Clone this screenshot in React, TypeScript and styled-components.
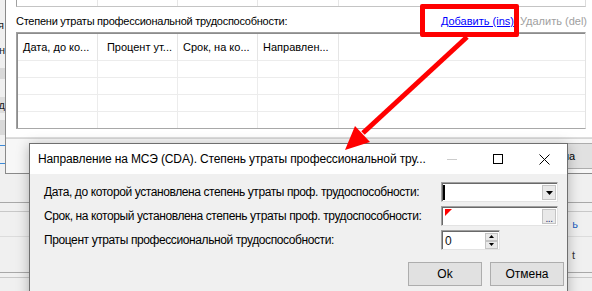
import React from "react";
import styled, { createGlobalStyle } from "styled-components";

const FONT = `"Liberation Sans", Arial, sans-serif`;

const Global = createGlobalStyle`
  html, body { margin: 0; padding: 0; }
  body {
    width: 592px; height: 291px; overflow: hidden;
    background: #f0f0f0; font-family: ${FONT}; font-size: 12px; color: #000;
  }
  #root { width: 592px; height: 291px; }
  * { box-sizing: border-box; }
`;

const Desktop = styled.div`
  position: relative;
  width: 592px;
  height: 291px;
  overflow: hidden;
  background: #f0f0f0;
`;

/* ---------- far back window (only edges visible) ---------- */
const BackWindow = styled.div`
  position: absolute;
  inset: 0;
  display: flex;
  flex-direction: column;
  background: #f0f0f0;
  font-size: 11px;
`;
const BackRow = styled.div<{ $h: number; $line?: string }>`
  flex: none;
  height: ${(p) => p.$h}px;
  display: flex;
  align-items: center;
  justify-content: space-between;
  border-bottom: ${(p) => (p.$line ? `1px solid ${p.$line}` : "0")};
`;
const LeftPeek = styled.div<{ $w: number }>`
  width: ${(p) => p.$w}px;
  height: 100%;
  overflow: hidden;
  display: flex;
  align-items: center;
  justify-content: flex-end;
  white-space: nowrap;
  color: #222;
`;
const PeekBox = styled.div<{ $bg: string }>`
  flex: none;
  height: 100%;
  min-width: 40px;
  background: ${(p) => p.$bg};
  display: flex;
  align-items: center;
  justify-content: flex-end;
  color: #222;
`;
const RightPeek = styled.div<{ $color: string; $pad: number }>`
  width: 24px;
  height: 100%;
  overflow: hidden;
  display: flex;
  align-items: center;
  justify-content: flex-end;
  padding-right: ${(p) => p.$pad}px;
  white-space: nowrap;
  color: ${(p) => p.$color};
`;

/* ---------- main window with the list ---------- */
const MainWindow = styled.div`
  position: absolute;
  left: 5px;
  top: 0;
  width: 600px;
  height: 174px;
  display: flex;
  flex-direction: column;
  background: #fff;
  border-left: 1px solid #8a8a8a;
  border-bottom: 1px solid #8a8a8a;
  font-size: 11px;
`;
const Panel = styled.div`
  flex: none;
  height: 137px;
  padding-left: 10px;
  display: flex;
  flex-direction: column;
`;
const TopTable = styled.div`
  flex: none;
  width: 570px;
  height: 7px;
  display: grid;
  grid-template-columns: 81px 80px 80px 81px 1fr;
  border-left: 1px solid #a0a0a0;
  border-right: 1px solid #dcdcdc;
  border-bottom: 1px solid #c4c4c4;
`;
const TopCell = styled.div`
  border-right: 1px solid #e6e6e6;
  &:last-child { border-right: 0; }
`;
const LabelRow = styled.div`
  flex: none;
  width: 571px;
  height: 25px;
  padding-top: 3px;
  display: flex;
  align-items: center;
  justify-content: space-between;
`;
const Caption = styled.span`
  color: #000;
  white-space: nowrap;
  letter-spacing: -0.25px;
`;
const Links = styled.div`
  display: flex;
  gap: 6px;
  white-space: nowrap;
`;
const LinkText = styled.span<{ $disabled?: boolean }>`
  color: ${(p) => (p.$disabled ? "#a0a0a0" : "#0000ff")};
  text-decoration: ${(p) => (p.$disabled ? "none" : "underline")};
`;
const ListView = styled.div`
  flex: none;
  width: 570px;
  height: 97px;
  background: #fff;
  border-top: 1px solid #a0a0a0;
  border-left: 1px solid #a0a0a0;
  border-right: 1px solid #e3e3e3;
  border-bottom: 1px solid #a8a8a8;
  box-shadow: inset 1px 1px 0 #8c8c8c;
  padding: 1px 0 0 1px;
  display: grid;
  grid-template-columns: 80px 80px 80px 81px 1fr;
  grid-template-rows: 27px repeat(4, 17px);
  overflow: hidden;
`;
const HeadCell = styled.div<{ $right?: boolean }>`
  display: flex;
  align-items: center;
  justify-content: ${(p) => (p.$right ? "flex-end" : "flex-start")};
  padding: 0 5px;
  border-right: 1px solid #e5e5e5;
  border-bottom: 1px solid #ececec;
  white-space: nowrap;
  overflow: hidden;
  &:nth-child(5n) { border-right: 0; }
`;
const GridCell = styled.div`
  border-right: 1px solid #ececec;
  border-bottom: 1px solid #ececec;
  &:nth-child(5n) { border-right: 0; }
`;
const Separator = styled.div`
  flex: none;
  height: 2px;
  background: linear-gradient(#e2e2e2, #d2d2d2);
`;
const Footer = styled.div`
  flex: none;
  height: 34px;
  background: #f7f7f7;
  display: flex;
  justify-content: flex-end;
  padding: 4px 12px 0 0;
`;

/* ---------- dialog ---------- */
const Dialog = styled.div`
  position: absolute;
  left: 29px;
  top: 143px;
  width: 539px;
  height: 170px;
  display: flex;
  flex-direction: column;
  background: #f0f0f0;
  border: 1px solid #6f6f6f;
  box-shadow: 0 2px 12px rgba(0, 0, 0, 0.28);
  letter-spacing: -0.4px;
`;
const TitleBar = styled.div`
  flex: none;
  height: 30px;
  background: #fff;
  display: flex;
  align-items: center;
`;
const TitleText = styled.div`
  flex: 1;
  min-width: 0;
  padding-left: 8px;
  white-space: nowrap;
  overflow: hidden;
  color: #000;
  letter-spacing: -0.13px;
`;
const CaptionButton = styled.div`
  flex: none;
  width: 46px;
  height: 30px;
  display: flex;
  align-items: center;
  justify-content: center;
`;
const Body = styled.div`
  flex: 1;
  padding: 8px 3px 0 14px;
  display: flex;
  flex-direction: column;
`;
const FormGrid = styled.div`
  display: grid;
  grid-template-columns: 397px 117px;
  grid-auto-rows: 20px;
  row-gap: 4px;
  align-items: center;
`;
const FieldLabel = styled.div`
  white-space: nowrap;
  color: #000;
`;
const Field = styled.div<{ $w?: number }>`
  position: relative;
  width: ${(p) => (p.$w ? `${p.$w}px` : "100%")};
  height: 20px;
  background: #fff;
  border-top: 1px solid #a0a0a0;
  border-left: 1px solid #a0a0a0;
  border-right: 1px solid #e3e3e3;
  border-bottom: 1px solid #e3e3e3;
  box-shadow: inset 1px 1px 0 #696969;
  display: flex;
  align-items: center;
  padding: 1px 1px 0 3px;
`;
const Caret = styled.div`
  position: absolute;
  left: 1px;
  top: 2px;
  width: 2px;
  height: 15px;
  background: #000;
`;
const ErrorMark = styled.svg`
  position: absolute;
  left: 3px;
  top: 2px;
`;
const FieldButton = styled.div`
  margin-left: auto;
  width: 14px;
  height: 15px;
  background: #e9e9e9;
  border: 1px solid #c4c4c4;
  display: flex;
  align-items: center;
  justify-content: center;
  color: #1a2a6a;
  font-size: 10px;
  line-height: 1;
`;
const Dots = styled.span`
  margin-top: 5px;
  letter-spacing: -0.5px;
`;
const SpinValue = styled.span`
  color: #111;
`;
const SpinButtons = styled.div`
  margin-left: auto;
  width: 13px;
  height: 16px;
  display: flex;
  flex-direction: column;
`;
const SpinButton = styled.div`
  flex: 1;
  background: #e9e9e9;
  border: 1px solid #c4c4c4;
  display: flex;
  align-items: center;
  justify-content: center;
`;
const ButtonRow = styled.div`
  margin-top: 12px;
  display: flex;
  justify-content: flex-end;
  gap: 8px;
`;
const PushButton = styled.div<{ $w: number; $h: number }>`
  width: ${(p) => p.$w}px;
  height: ${(p) => p.$h}px;
  flex: none;
  background: #e1e1e1;
  border: 1px solid #adadad;
  display: flex;
  align-items: center;
  justify-content: center;
  color: #000;
  letter-spacing: 0;
`;

/* ---------- annotation ---------- */
const RedBox = styled.div`
  position: absolute;
  left: 420px;
  top: 4px;
  width: 99px;
  height: 33px;
  border: 5px solid #ff0000;
  border-radius: 2px;
`;
const ArrowLayer = styled.svg`
  position: absolute;
  left: 0;
  top: 0;
  pointer-events: none;
`;

const cols = [0, 1, 2, 3, 4];
const rows = [0, 1, 2, 3];

export default function App() {
  return (
    <>
      <Global />
      <Desktop>
        <BackWindow>
          <BackRow $h={18} />
          <BackRow $h={14}>
            <LeftPeek $w={4}>Фамилия</LeftPeek>
          </BackRow>
          <BackRow $h={11} />
          <BackRow $h={14}>
            <LeftPeek $w={5}>Организация, ан</LeftPeek>
          </BackRow>
          <BackRow $h={11} />
          <BackRow $h={11}>
            <LeftPeek $w={5}>
              <PeekBox $bg="#d9d9d9" />
            </LeftPeek>
          </BackRow>
          <BackRow $h={18} />
          <BackRow $h={16}>
            <LeftPeek $w={5}>
              <PeekBox $bg="#dedede">Код</PeekBox>
            </LeftPeek>
          </BackRow>
          <BackRow $h={7} />
          <BackRow $h={15}>
            <LeftPeek $w={5}>
              <PeekBox $bg="#d9d9d9" />
            </LeftPeek>
          </BackRow>
          <BackRow $h={11} $line="#3c8ad8" />
          <BackRow $h={18} $line="#3c8ad8" />
          <BackRow $h={39} $line="#a8a8a8" />
          <BackRow $h={9} $line="#c8c8c8" />
          <BackRow $h={25} $line="#dcdcdc">
            <span />
            <RightPeek $color="#1f5fbf" $pad={14}>
              ь
            </RightPeek>
          </BackRow>
          <BackRow $h={36} $line="#a8a8a8">
            <span />
            <RightPeek $color="#333" $pad={17}>
              t
            </RightPeek>
          </BackRow>
          <BackRow $h={5} $line="#c8c8c8" />
        </BackWindow>

        <MainWindow>
          <Panel>
            <TopTable>
              {cols.map((c) => (
                <TopCell key={c} />
              ))}
            </TopTable>
            <LabelRow>
              <Caption>Степени утраты профессиональной трудоспособности:</Caption>
              <Links>
                <LinkText>Добавить (ins)</LinkText>
                <LinkText $disabled>Удалить (del)</LinkText>
              </Links>
            </LabelRow>
            <ListView>
              <HeadCell>Дата, до ко...</HeadCell>
              <HeadCell $right>Процент ут...</HeadCell>
              <HeadCell>Срок, на ко...</HeadCell>
              <HeadCell>Направлен...</HeadCell>
              <HeadCell />
              {rows.map((r) =>
                cols.map((c) => <GridCell key={`${r}-${c}`} />)
              )}
            </ListView>
          </Panel>
          <Separator />
          <Footer>
            <PushButton $w={75} $h={26}>Отмена</PushButton>
          </Footer>
        </MainWindow>

        <Dialog>
          <TitleBar>
            <TitleText>
              Направление на МСЭ (CDA). Степень утраты профессиональной тру...
            </TitleText>
            <CaptionButton>
              <svg width="10" height="10" viewBox="0 0 10 10">
                <line x1="0" y1="5.5" x2="10" y2="5.5" stroke="#cccccc" strokeWidth="1" />
              </svg>
            </CaptionButton>
            <CaptionButton>
              <svg width="10" height="10" viewBox="0 0 10 10">
                <rect x="0.5" y="0.5" width="9" height="9" fill="none" stroke="#000" strokeWidth="1" />
              </svg>
            </CaptionButton>
            <CaptionButton>
              <svg width="11" height="11" viewBox="0 0 11 11">
                <path d="M0.5 0.5 L10.5 10.5 M10.5 0.5 L0.5 10.5" stroke="#000" strokeWidth="1" />
              </svg>
            </CaptionButton>
          </TitleBar>
          <Body>
            <FormGrid>
              <FieldLabel>
                Дата, до которой установлена степень утраты проф. трудоспособности:
              </FieldLabel>
              <Field>
                <Caret />
                <FieldButton>
                  <svg width="7" height="4" viewBox="0 0 7 4">
                    <polygon points="0,0 7,0 3.5,4" fill="#000" />
                  </svg>
                </FieldButton>
              </Field>
              <FieldLabel>
                Срок, на который установлена степень утраты проф. трудоспособности:
              </FieldLabel>
              <Field>
                <ErrorMark width="7" height="7" viewBox="0 0 7 7">
                  <polygon points="0,0 7,0 0,7" fill="#ff0000" />
                </ErrorMark>
                <FieldButton>
                  <Dots>...</Dots>
                </FieldButton>
              </Field>
              <FieldLabel>Процент утраты профессиональной трудоспособности:</FieldLabel>
              <Field $w={59}>
                <SpinValue>0</SpinValue>
                <SpinButtons>
                  <SpinButton>
                    <svg width="5" height="3" viewBox="0 0 5 3">
                      <polygon points="0,3 5,3 2.5,0" fill="#000" />
                    </svg>
                  </SpinButton>
                  <SpinButton>
                    <svg width="5" height="3" viewBox="0 0 5 3">
                      <polygon points="0,0 5,0 2.5,3" fill="#000" />
                    </svg>
                  </SpinButton>
                </SpinButtons>
              </Field>
            </FormGrid>
            <ButtonRow>
              <PushButton $w={74} $h={24}>Ok</PushButton>
              <PushButton $w={74} $h={24}>Отмена</PushButton>
            </ButtonRow>
          </Body>
        </Dialog>

        <RedBox />
        <ArrowLayer width="592" height="291" viewBox="0 0 592 291">
          <line x1="467" y1="37" x2="363" y2="133" stroke="#ff0000" strokeWidth="5" />
          <polygon points="345,150 370,142 355,126" fill="#ff0000" />
        </ArrowLayer>
      </Desktop>
    </>
  );
}
